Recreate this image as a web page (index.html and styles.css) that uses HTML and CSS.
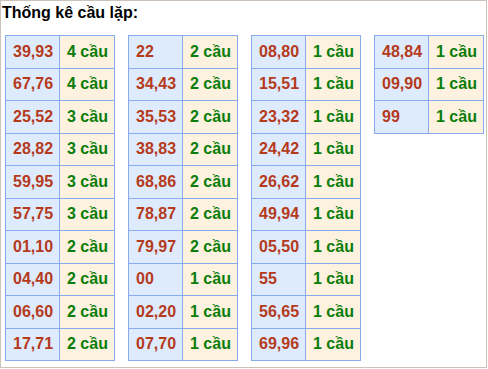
FILE: index.html
```html
<!DOCTYPE html>
<html lang="vi">
<head>
<meta charset="utf-8">
<title>Thống kê cầu lặp</title>
<link rel="stylesheet" href="styles.css">
</head>
<body>
<div class="box">
  <div class="title">Thống kê cầu lặp:</div>
  <div class="tables">
    <table class="tk">
      <tr><td class="num">39,93</td><td class="cnt">4 cầu</td></tr>
      <tr><td class="num">67,76</td><td class="cnt">4 cầu</td></tr>
      <tr><td class="num">25,52</td><td class="cnt">3 cầu</td></tr>
      <tr><td class="num">28,82</td><td class="cnt">3 cầu</td></tr>
      <tr><td class="num">59,95</td><td class="cnt">3 cầu</td></tr>
      <tr><td class="num">57,75</td><td class="cnt">3 cầu</td></tr>
      <tr><td class="num">01,10</td><td class="cnt">2 cầu</td></tr>
      <tr><td class="num">04,40</td><td class="cnt">2 cầu</td></tr>
      <tr><td class="num">06,60</td><td class="cnt">2 cầu</td></tr>
      <tr><td class="num">17,71</td><td class="cnt">2 cầu</td></tr>
    </table>
    <table class="tk">
      <tr><td class="num">22</td><td class="cnt">2 cầu</td></tr>
      <tr><td class="num">34,43</td><td class="cnt">2 cầu</td></tr>
      <tr><td class="num">35,53</td><td class="cnt">2 cầu</td></tr>
      <tr><td class="num">38,83</td><td class="cnt">2 cầu</td></tr>
      <tr><td class="num">68,86</td><td class="cnt">2 cầu</td></tr>
      <tr><td class="num">78,87</td><td class="cnt">2 cầu</td></tr>
      <tr><td class="num">79,97</td><td class="cnt">2 cầu</td></tr>
      <tr><td class="num">00</td><td class="cnt">1 cầu</td></tr>
      <tr><td class="num">02,20</td><td class="cnt">1 cầu</td></tr>
      <tr><td class="num">07,70</td><td class="cnt">1 cầu</td></tr>
    </table>
    <table class="tk">
      <tr><td class="num">08,80</td><td class="cnt">1 cầu</td></tr>
      <tr><td class="num">15,51</td><td class="cnt">1 cầu</td></tr>
      <tr><td class="num">23,32</td><td class="cnt">1 cầu</td></tr>
      <tr><td class="num">24,42</td><td class="cnt">1 cầu</td></tr>
      <tr><td class="num">26,62</td><td class="cnt">1 cầu</td></tr>
      <tr><td class="num">49,94</td><td class="cnt">1 cầu</td></tr>
      <tr><td class="num">05,50</td><td class="cnt">1 cầu</td></tr>
      <tr><td class="num">55</td><td class="cnt">1 cầu</td></tr>
      <tr><td class="num">56,65</td><td class="cnt">1 cầu</td></tr>
      <tr><td class="num">69,96</td><td class="cnt">1 cầu</td></tr>
    </table>
    <table class="tk">
      <tr><td class="num">48,84</td><td class="cnt">1 cầu</td></tr>
      <tr><td class="num">09,90</td><td class="cnt">1 cầu</td></tr>
      <tr><td class="num">99</td><td class="cnt">1 cầu</td></tr>
    </table>
  </div>
</div>
</body>
</html>
```
FILE: styles.css
```css
html, body {
  margin: 0;
  padding: 0;
  background: #ffffff;
}
body {
  font-family: "Liberation Sans", Arial, sans-serif;
}
.box {
  width: 485px;
  height: 366px;
  border: 1px solid #cbc3b9;
  box-sizing: content-box;
  background: #ffffff;
}
.title {
  font-size: 16px;
  font-weight: bold;
  color: #000000;
  padding: 3px 0 0 1px;
  line-height: 18px;
}
.tables {
  display: flex;
  align-items: flex-start;
  gap: 13px;
  margin-top: 13px;
  padding-left: 4px;
}
.tk {
  border-collapse: collapse;
  table-layout: fixed;
  width: 110px;
}
.tk td {
  border: 1px solid #88aaee;
  height: 32.5px;
  padding: 0 0 0 7px;
  font-size: 16px;
  font-weight: bold;
  white-space: nowrap;
  box-sizing: border-box;
}
.tk .num {
  width: 54px;
  background: #deebfc;
  color: #b53a1c;
}
.tk .cnt {
  background: #fdf1df;
  color: #0a7d0a;
}
```
